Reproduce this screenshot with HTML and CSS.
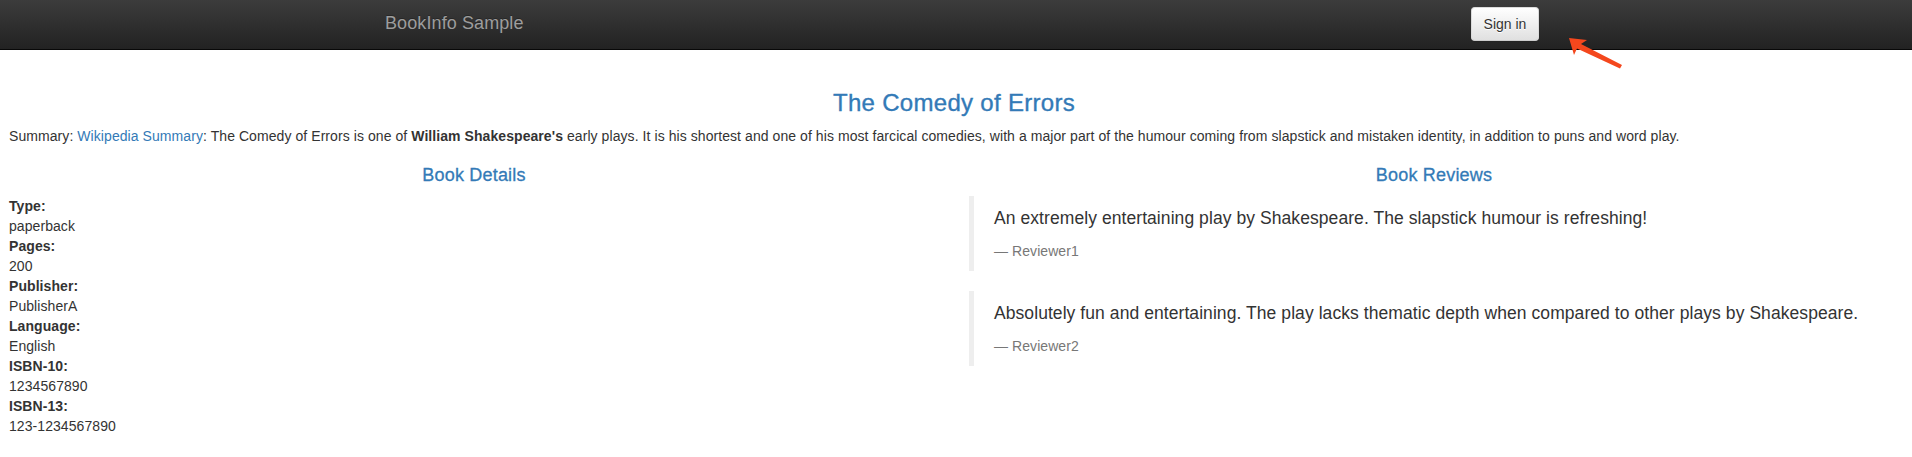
FILE: index.html
```html
<!DOCTYPE html>
<html lang="en">
<head>
<meta charset="utf-8">
<title>Simple Bookstore App</title>
<link rel="stylesheet" href="styles.css">
</head>
<body>
<nav class="navbar">
  <div class="navbar-inner">
    <span class="brand">BookInfo Sample</span>
    <button class="btn-signin" type="button">Sign in</button>
  </div>
</nav>
<svg class="arrow" width="70" height="45" viewBox="0 0 70 45" aria-hidden="true">
  <polygon points="9,8 27,10 21,14 62,35 60,38.5 17,18.5 14,25" fill="#f4471d"/>
</svg>
<main class="page">
  <h3 class="title">The Comedy of Errors</h3>
  <p class="summary">Summary: <a href="#">Wikipedia Summary</a>: The Comedy of Errors is one of <b>William Shakespeare's</b> early plays. It is his shortest and one of his most farcical comedies, with a major part of the humour coming from slapstick and mistaken identity, in addition to puns and word play.</p>
  <div class="columns">
    <section class="col">
      <h4 class="col-title">Book Details</h4>
      <dl class="details">
        <dt>Type:</dt><dd>paperback</dd>
        <dt>Pages:</dt><dd>200</dd>
        <dt>Publisher:</dt><dd>PublisherA</dd>
        <dt>Language:</dt><dd>English</dd>
        <dt>ISBN-10:</dt><dd>1234567890</dd>
        <dt>ISBN-13:</dt><dd>123-1234567890</dd>
      </dl>
    </section>
    <section class="col">
      <h4 class="col-title">Book Reviews</h4>
      <blockquote class="review">
        <p>An extremely entertaining play by Shakespeare. The slapstick humour is refreshing!</p>
        <small>Reviewer1</small>
      </blockquote>
      <blockquote class="review">
        <p>Absolutely fun and entertaining. The play lacks thematic depth when compared to other plays by Shakespeare.</p>
        <small>Reviewer2</small>
      </blockquote>
    </section>
  </div>
</main>
</body>
</html>
```

FILE: styles.css
```css
* { box-sizing: border-box; }

html, body {
  margin: 0;
  padding: 0;
  background: #fff;
}

body {
  font-family: "Liberation Sans", Arial, Helvetica, sans-serif;
  font-size: 14px;
  line-height: 1.42857143;
  color: #333;
}

.navbar {
  height: 50px;
  margin-bottom: 20px;
  background-image: linear-gradient(to bottom, #3c3c3c 0, #222 100%);
  border-bottom: 1px solid #080808;
}

.navbar-inner {
  width: 1170px;
  margin: 0 auto;
  display: flex;
  justify-content: space-between;
  align-items: flex-start;
}

.brand {
  padding: 13px 14px 0;
  font-size: 18px;
  line-height: 20px;
  letter-spacing: 0.1px;
  color: #9d9d9d;
  text-shadow: 0 -1px 0 rgba(0, 0, 0, 0.25);
}

.btn-signin {
  margin: 7px 2px 0 0;
  height: 34px;
  width: 68px;
  padding: 6px 0;
  font-family: inherit;
  font-size: 14px;
  line-height: 20px;
  white-space: nowrap;
  text-align: center;
  color: #333;
  background-image: linear-gradient(to bottom, #fff 0, #e0e0e0 100%);
  border: 1px solid #ccc;
  border-color: #dbdbdb #dbdbdb #ccc;
  border-radius: 4px;
  text-shadow: 0 1px 0 #fff;
  box-shadow: inset 0 1px 0 rgba(255, 255, 255, 0.15), 0 1px 1px rgba(0, 0, 0, 0.075);
}

.arrow {
  position: absolute;
  left: 1560px;
  top: 30px;
}

.page {
  display: flow-root;
  padding: 0 13px 0 9px;
  letter-spacing: 0.07px;
}

.title {
  margin: 20px 0 10px;
  font-size: 24px;
  font-weight: 500;
  line-height: 1.1;
  letter-spacing: 0.3px;
  text-align: center;
  color: #337ab7;
  -webkit-text-stroke: 0.35px #337ab7;
}

.summary {
  margin: 0 0 10px;
  white-space: nowrap;
}

.summary a {
  color: #337ab7;
  text-decoration: none;
}

.summary b {
  font-weight: 700;
}

.columns {
  display: grid;
  grid-template-columns: 1fr 1fr;
  column-gap: 30px;
}

.col-title {
  margin: 10px 0 10px;
  font-size: 18px;
  font-weight: 500;
  line-height: 1.1;
  letter-spacing: 0.2px;
  text-align: center;
  color: #337ab7;
  -webkit-text-stroke: 0.3px #337ab7;
}

.details {
  margin: 0 0 20px;
}

.details dt {
  font-weight: 700;
  line-height: 20px;
}

.details dd {
  margin: 0;
  line-height: 20px;
}

.review {
  margin: 0 0 20px;
  padding: 10px 20px;
  font-size: 17.5px;
  border-left: 5px solid #eee;
}

.review p {
  margin: 0 0 10px;
}

.review small {
  display: block;
  font-size: 80%;
  line-height: 1.42857143;
  color: #777;
}

.review small::before {
  content: "\2014 \00A0";
}
```
